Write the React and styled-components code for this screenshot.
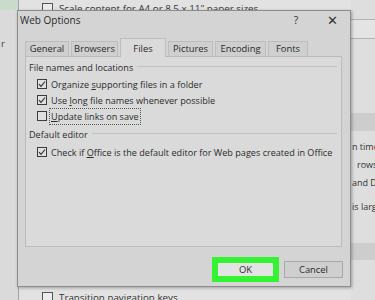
import React from 'react';
import styled, { createGlobalStyle, css } from 'styled-components';

const Global = createGlobalStyle`
  html, body { margin: 0; padding: 0; background: #dedede; }
  body { font-family: "Open Sans", "Noto Sans", sans-serif; }
`;

const FONT = `"Open Sans", "Noto Sans", sans-serif`;
const TXT = 9.1;

const Screen = styled.div`
  position: relative;
  width: 375px;
  height: 300px;
  overflow: hidden;
  background: #dedede;
  font-family: ${FONT};
  color: #262626;
  font-size: ${TXT}px;
`;

/* ---------- background (Excel Options window behind) ---------- */
const Backdrop = styled.div`
  display: grid;
  grid-template-columns: 19px 1fr 24px;
  height: 100%;
`;

const LeftRail = styled.div`
  border-right: 1px solid #a4a4a4;
  background: linear-gradient(#c9dccc 0 10px, #dadada 10px);
  padding-top: 37px;
  font-size: 9.5px;
  color: #444;
  padding-left: 1px;
`;

const CenterArea = styled.div`
  display: flex;
  flex-direction: column;
  justify-content: space-between;
  padding-left: 23px;
  background: #e2e2e2;
`;

const BgRow = styled.div`
  display: flex;
  align-items: center;
  gap: 6px;
  height: 12px;
  margin-top: ${p => p.$top || 0}px;
  margin-bottom: ${p => p.$bottom || 0}px;
  white-space: nowrap;
  font-size: 9.8px;
  color: #333;
`;

const BgBox = styled.span`
  width: 9px;
  height: 9px;
  border: 1px solid #555;
  background: #ececec;
  flex: none;
  display: flex;
`;

const RightRail = styled.div`
  display: flex;
  flex-direction: column;
  background: #dedede;
  font-size: 9px;
  color: #333;
  white-space: nowrap;
  overflow: hidden;
`;

const RailBox = styled.div`
  margin-top: 19px;
  height: 18px;
  border-top: 1px solid #b4b4b4;
  border-bottom: 1px solid #b4b4b4;
  background: #e4e4e4;
`;

const RailBand = styled.div`
  height: ${p => p.$h}px;
  margin-top: ${p => p.$top}px;
  background: #cdcdcd;
`;

const RailText = styled.div`
  height: 18px;
  line-height: 18px;
  padding-left: ${p => p.$indent || 1}px;
  margin-top: ${p => p.$top || 0}px;
`;

/* ---------- dialog ---------- */
const Dialog = styled.div`
  position: absolute;
  left: 17px;
  top: 10px;
  width: 334px;
  height: 277px;
  box-sizing: border-box;
  border: 1px solid #8d8d8d;
  background: #d4d4d4;
  box-shadow: 1px 1px 3px rgba(0, 0, 0, 0.3);
  display: flex;
  flex-direction: column;
  z-index: 2;
`;

const TitleBar = styled.div`
  display: flex;
  align-items: center;
  height: 18px;
  padding-left: 2px;
`;

const Title = styled.div`
  flex: 1;
  font-size: 10px;
  color: #2a2a2a;
`;

const TitleButton = styled.div`
  width: 36px;
  text-align: center;
  font-size: ${p => p.$size || 10.5}px;
  color: #333;
`;

const TabStrip = styled.div`
  display: flex;
  align-items: flex-end;
  gap: 2px;
  margin: 8px 0 0 7px;
  height: 19px;
  position: relative;
  z-index: 1;
`;

const Tab = styled.div`
  box-sizing: border-box;
  width: ${p => p.$w}px;
  height: 15px;
  padding-bottom: 1px;
  border: 1px solid #bdbdbd;
  border-bottom: none;
  background: #cfcfcf;
  display: flex;
  align-items: center;
  justify-content: center;
  font-size: 9.4px;
  color: #2a2a2a;
  ${p => p.$active && css`
    height: 19px;
    padding-bottom: 0;
    background: #dadada;
    margin-bottom: -1px;
  `}
`;

const Panel = styled.div`
  margin: 0 8px 0 7px;
  height: 191px;
  box-sizing: border-box;
  border: 1px solid #bcbcbc;
  background: #dadada;
  padding: 2px 3px 0 3px;
  display: flex;
  flex-direction: column;
`;

const GroupTitle = styled.div`
  display: flex;
  align-items: center;
  height: 16px;
  margin-top: ${p => p.$top || 0}px;
  font-size: ${TXT}px;
  color: #2a2a2a;
  white-space: nowrap;
  &::after {
    content: "";
    flex: 1;
    height: 1px;
    margin: 0 1px 1px 4px;
    background: #c2c2c2;
  }
`;

const CheckRow = styled.label`
  display: flex;
  align-items: center;
  height: 16px;
  padding-left: 8px;
  gap: 4px;
  margin-top: ${p => p.$top || 0}px;
  font-size: ${TXT}px;
  color: #2a2a2a;
  white-space: nowrap;
  u { text-decoration: underline; text-underline-offset: 1px; }
`;

const Box = styled.span`
  width: 10px;
  height: 10px;
  box-sizing: border-box;
  border: 1px solid #3c3c3c;
  background: #e0e0e0;
  flex: none;
  display: flex;
  align-items: center;
  justify-content: center;
`;

const LabelText = styled.span`
  ${p => p.$focused && css`
    outline: 1px dotted #555;
    outline-offset: 1px;
  `}
`;

const Footer = styled.div`
  flex: 1;
  display: flex;
  justify-content: flex-end;
  align-items: flex-end;
  gap: 9px;
  padding: 0 7px 8px 0;
`;

const Button = styled.div`
  box-sizing: border-box;
  width: 59px;
  height: 17px;
  border: 1px solid #a9a9a9;
  background: #cfcfcf;
  display: flex;
  align-items: center;
  justify-content: center;
  font-size: 9.4px;
  color: #2a2a2a;
  ${p => p.$primary && css`
    background: #e3e3e3;
    border: 2px solid #35f235;
    box-shadow: 0 0 0 4px #35f235;
  `}
`;

const Check = () => (
  <svg width="8" height="8" viewBox="0 0 8 8">
    <path d="M1 4.2 L3 6.3 L7 1.5" fill="none" stroke="#2d2d2d" strokeWidth="1.1" />
  </svg>
);

const Option = ({ checked, children, focused, top }) => (
  <CheckRow $top={top}>
    <Box>{checked && <Check />}</Box>
    <LabelText $focused={focused}>{children}</LabelText>
  </CheckRow>
);

export default function App() {
  return (
    <Screen>
      <Global />
      <Backdrop>
        <LeftRail>r</LeftRail>
        <CenterArea>
          <BgRow $top={2}>
            <BgBox />
            <span>Scale content for A4 or 8.5 x 11" paper sizes</span>
          </BgRow>
          <BgRow $bottom={-3}>
            <BgBox />
            <span>Transition navigation keys</span>
          </BgRow>
        </CenterArea>
        <RightRail>
          <RailBox />
          <RailBand $h={18} $top={74} />
          <RailText $top={7}>n time</RailText>
          <RailText $indent={6}>rows</RailText>
          <RailText>and D</RailText>
          <RailText $top={6}>is larg</RailText>
          <RailBand $h={17} $top={27} />
        </RightRail>
      </Backdrop>

      <Dialog>
        <TitleBar>
          <Title>Web Options</Title>
          <TitleButton>?</TitleButton>
          <TitleButton $size={13}>✕</TitleButton>
        </TitleBar>
        <TabStrip>
          <Tab $w={44}>General</Tab>
          <Tab $w={47}>Browsers</Tab>
          <Tab $w={46} $active>Files</Tab>
          <Tab $w={45}>Pictures</Tab>
          <Tab $w={51}>Encoding</Tab>
          <Tab $w={40}>Fonts</Tab>
        </TabStrip>
        <Panel>
          <GroupTitle>File names and locations</GroupTitle>
          <Option checked top={1}>Organize <u>s</u>upporting files in a folder</Option>
          <Option checked>Use <u>l</u>ong file names whenever possible</Option>
          <Option focused><u>U</u>pdate links on save</Option>
          <GroupTitle $top={2}>Default editor</GroupTitle>
          <Option checked top={2}>Check if <u>O</u>ffice is the default editor for Web pages created in Office</Option>
        </Panel>
        <Footer>
          <Button $primary>OK</Button>
          <Button>Cancel</Button>
        </Footer>
      </Dialog>
    </Screen>
  );
}
